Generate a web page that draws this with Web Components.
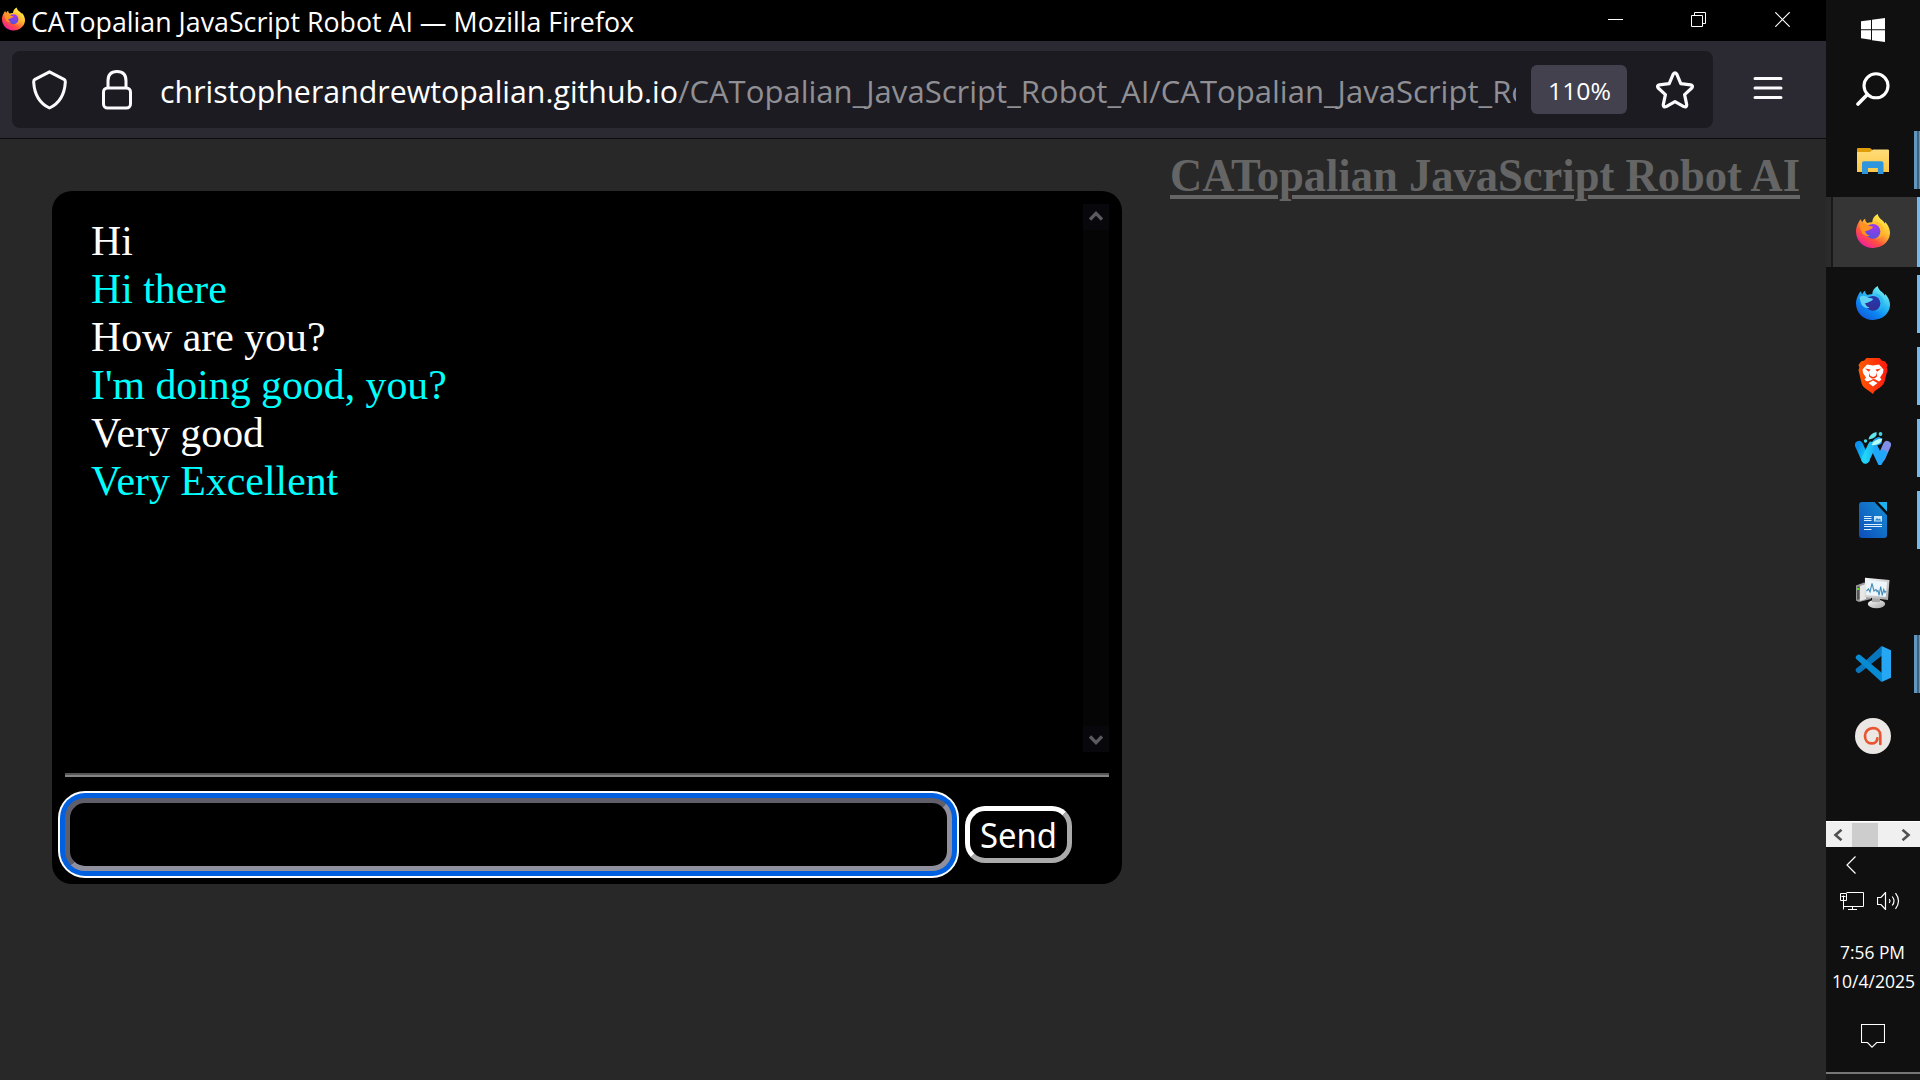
<!DOCTYPE html>
<html lang="en">
<head>
<meta charset="utf-8">
<title>CATopalian JavaScript Robot AI</title>
<style>
html,body{margin:0;height:100%;background:#282828;overflow:hidden}
body{font-family:"Open Sans","Noto Sans",sans-serif;color:#fff}
</style>
</head>
<body>
<desk-top></desk-top>
<script>
function define(name, css, html, ready) {
  const t = document.createElement('template');
  t.innerHTML = '<style>*{box-sizing:border-box}' + css + '</style>' + html;
  customElements.define(name, class extends HTMLElement {
    connectedCallback() {
      if (this.shadowRoot) return;
      this.attachShadow({mode: 'open'}).append(t.content.cloneNode(true));
      if (ready) ready(this, this.shadowRoot);
    }
  });
}

/* A single line of text that is condensed or widened to the given width. */
define('fit-text',
  ':host{display:block;white-space:nowrap;flex:none}span{display:inline-block;transform-origin:0 50%;vertical-align:top}',
  '<span><slot></slot></span>',
  (host, root) => {
    const s = root.querySelector('span'), w = +host.getAttribute('width');
    host.style.width = w + 'px';
    s.style.transform = 'scaleX(' + w / s.getBoundingClientRect().width + ')';
  });

const fox = (id, a, b, c, d, core1, core2, tail) => `<svg viewBox="0 0 34 34"><defs>
<linearGradient id="b${id}" x1=".85" y1=".1" x2=".25" y2=".95"><stop offset="0" stop-color="${a}"/><stop offset=".4" stop-color="${b}"/><stop offset=".72" stop-color="${c}"/><stop offset="1" stop-color="${d}"/></linearGradient>
<radialGradient id="c${id}" cx=".6" cy=".2" r=".9"><stop offset="0" stop-color="${core1}"/><stop offset="1" stop-color="${core2}"/></radialGradient></defs>
<path fill="url(#b${id})" d="M2.7 8.2C3.2 6.9 4.2 6 5 5.3c.1 1.2.5 2.2 1.2 2.9C7 6.4 8 5.3 9.2 4.8c0 2 .7 3.400 2.300 4.100 1.500-.7 3-.9 4.700-.7.300-3.800 2.200-6.500 5.500-8.200.4 2.700 2 4.100 4.200 6 1.200 1 2.200 2.200 2.900 3.400l.5-1.500c2.600 3.100 4.500 6.400 4.700 10.100.4 9-7.200 16-17 16S0 26.500 0 17.400c0-3.400 1-6.200 2.700-9.200z"/>
<circle cx="17" cy="17.300" r="7.400" fill="url(#c${id})"/>
<path fill="${tail}" d="M3.600 11c3.500-2 6.500-1.500 8.600 1.100 2 .2 4.300.2 4.700.8.300.9-2.300 2.500-4.100 3-.8.600-2.600 1.200-4.200 1 1 2.300 2.500 4 5.200 4.500-2.700 1.300-6 .2-7.700-2.100-1.200-1.700-2-4.800-2.500-8.300z"/>
<path fill="${b}" opacity=".75" d="M18 7.600c6-.2 10.300 4.600 9.500 10-.6 4.600-4.500 7.500-8.300 7.700 5-1.800 6.700-6.200 5-10.400-1.200-3.300-3.500-4.700-6.200-7.300z"/></svg>`;
const foxA = fox('f', '#fff44f', '#ffb52c', '#ff4f3f', '#f0209d', '#a436ee', '#4c55dc', '#ff9220');
const foxB = fox('d', '#7af4f2', '#29b8f2', '#0a84f4', '#1460d8', '#263aad', '#322c91', '#5fd3f6');

const icons = {
  fox: foxA, foxdev: foxB,
  start: '<svg viewBox="0 0 24 24" fill="#fff"><path d="M0 3.300 10 1.900v9.400H0zM11 1.800 24 0v11.300H11zM0 12.300h10v9.400L0 20.300zM11 12.300h13V24l-13-1.800z"/></svg>',
  search: '<svg viewBox="0 0 34 34" fill="none" stroke="#fff" stroke-width="3.100"><circle cx="20" cy="13.800" r="12"/><path d="M11.400 22.400 2 32" stroke-linecap="round" stroke-width="3.600"/></svg>',
  folder: '<svg viewBox="0 0 32 27"><defs><linearGradient id="y" x2="0" y2="1"><stop stop-color="#ffdc79"/><stop offset="1" stop-color="#fbc846"/></linearGradient></defs><path fill="#df9d0b" d="M0 2Q0 1 1 1h12l2.500 2L14 6H0z"/><path fill="url(#y)" d="M0 5h13l3-2.400h15q1 0 1 1V25H0z"/><path fill="#2f95dc" d="M7 14.300h17.500q2 0 2 2V27h-5.600v-6H11v6H5V16.300q0-2 2-2z"/></svg>',
  brave: '<svg viewBox="0 0 30 36"><defs><linearGradient id="r"><stop stop-color="#ff5a00"/><stop offset="1" stop-color="#ff1a10"/></linearGradient></defs><path fill="url(#r)" d="M8.500 0h13L24 2.800q2.500-.5 4 2L29.500 7l-.8 2.500.8 2.300-3 12q-.8 3-3.300 4.700l-6.700 4.700L15 36l-1.600-1.300L6.800 30Q4.200 28 3.500 25L.5 12l.8-2.400L.5 7 2 4.800q1.500-2.500 4-2z"/><path fill="#fff" d="M9 6.500l6 1 6-1 4.500 5-.5 3.500-3 4.500 1.500 2-2.500 2-4-2.300L15 21l-2 1.200L9 23.500l-2.500-2 1.500-2L5 15l-.5-3.500zM15 22.500l4.500 2.500-4.500 3.500-4.500-3.500z"/><path fill="#ff3209" d="M7 10.500l5.500 1-1.500 2 1.400 4.500L15 19l2.600-1 1.400-4.500-1.500-2 5.500-1-4.500 3.800.5 4.200-2.800 2H13.800l-2.800-2 .5-4.200z"/><path fill="#fff" d="M13 10h4l-.8 7h-2.400z"/></svg>',
  water: '<svg viewBox="0 0 36 34" fill="none" stroke-linecap="round"><defs><linearGradient id="w" x2="1" y2="1"><stop stop-color="#0b91ee"/><stop offset="1" stop-color="#12d0f7"/></linearGradient><linearGradient id="v" x2="1"><stop stop-color="#20d5f8"/><stop offset="1" stop-color="#1c9ff5"/></linearGradient></defs><path stroke="#7f8ee9" stroke-width="8" d="M32 14l-5.500 12.500"/><path stroke="#20a7f9" stroke-width="7.500" d="M19.500 17l5.500 11.500 3-6"/><path stroke="url(#w)" stroke-width="8" d="M4 14l6.500 14.500"/><path stroke="url(#v)" stroke-width="8" d="M10.500 28.200L17 14.500q2-4 6-4.500"/><path fill="#b6fff7" d="M16.500 14q2.500-6 11-6.500-1.500 5-5.500 6t-5.500.5z"/><path fill="#101010" d="M12 9.500q0-8 9.500-9.500h3l-1 6q-4 1-6.500 5z"/><path fill="#5fe6ee" d="M13.500 8.500q1-6 8-7.500 1.500 6-8 7.500z"/><circle cx="10.500" cy="10" r="1.700" fill="#46dbe8"/><circle cx="25.500" cy="3" r="1.900" fill="#46cfdc"/></svg>',
  writer: '<svg viewBox="0 0 28 36"><defs><linearGradient id="l" x1="1" x2="0" y2="1"><stop stop-color="#158fd3"/><stop offset="1" stop-color="#0d4dba"/></linearGradient></defs><path fill="url(#l)" d="M3 0h13l12 13v20q0 3-3 3H3q-3 0-3-3V3q0-3 3-3z"/><path fill="#0b0d10" d="M15.500 0H19l9 9.500V13z"/><path fill="#1cb2f0" d="M19 0h9v9.500z"/><path stroke="#dcefff" stroke-width="1" d="M5 14.500h7.500M5 16.500h7.500M5 18.500h7.500M5 22.500h18M5 24.500h18M5 27.500h7.500"/><path fill="#c9e5fb" d="M15 14h8v5.500h-8z"/><path fill="#2384cc" d="m16 18.600 2-2.600 1.600 1.600 1.200-1 1.400 2z"/></svg>',
  monitor: '<svg viewBox="0 0 34 32"><defs><linearGradient id="g" x2="1" y2="1"><stop stop-color="#fafafa"/><stop offset="1" stop-color="#a6a6a6"/></linearGradient></defs><path fill="#9b9b9b" d="M0 8.500 8 5.500l7 3V22L3 25 0 23.500z"/><path fill="#e7e7e7" d="M4 9l6-2v15l-6 2z"/><path fill="#565656" d="M1 10l2.500-1v13L1 23z"/><path fill="#54dd18" d="M1 11h2.300v2H1z"/><ellipse cx="20.500" cy="27" rx="8.700" ry="4.200" fill="url(#g)"/><path fill="#a9a9a9" d="M16 20h8v5h-8z"/><path fill="url(#g)" d="M9 .8 33.500 3 32 23 8.500 20z"/><path fill="#edf6fa" d="M10.500 2.800 31 4.900 29.800 20 10.200 18z"/><path fill="none" stroke="#448bb9" stroke-width="1.100" d="M10.500 14l2-2 1.500 3L16 6.500 18 14l2-1.500 1 2 1-1 1 5 1.700-9 1.500 9 1.500-6 1.300 3 1-1.500"/></svg>',
  code: '<svg viewBox="0 0 36 36"><path fill="#0876bf" d="M26.500 0 7 18 1.200 22.500Q0 24 1 25.600l1.500 1.200q1.200.8 2.800-.3L27 9.500z"/><path fill="#078bd3" d="M26.500 36 1 12.700Q0 11.300 1.200 10l1.500-1.300q1.300-.7 2.600.3L27 27z"/><path fill="#25a7f4" d="M26.500 0 36 4.200v27.600L26.500 36z"/></svg>',
  a: '<svg viewBox="0 0 36 36"><circle cx="18" cy="18" r="18" fill="#ebe7e4"/><path fill="none" stroke="#e95431" stroke-width="2.700" stroke-linecap="round" d="M25.300 26V17.500C25.300 12.500 22 10.200 18 10.200c-5 0-8 3.500-8 7.800s2.700 7.400 6.500 7.400c3.600 0 5.800-2.300 5.800-5"/></svg>',
  shield: '<svg viewBox="0 0 35 40" fill="none" stroke="#fbfbfe" stroke-width="3" stroke-linejoin="round"><path d="M17.500 1.800 32 9.300q1.500 1 1.300 3C32.500 25 28 33 17.500 38 7 33 2.500 25 1.700 12.300q-.2-2 1.300-3z"/></svg>',
  lock: '<svg viewBox="0 0 30 40" fill="none" stroke="#fbfbfe" stroke-width="3"><rect x="1.500" y="18" width="27" height="20" rx="4"/><path d="M6 18v-7.300Q6 1.500 15 1.500t9 9.200V18"/></svg>',
  star: '<svg viewBox="0 0 38 38" fill="none" stroke="#fbfbfe" stroke-width="3.200" stroke-linejoin="round"><path d="M17.200 3.200q1.800-2.800 3.600 0l4 9.400 9.800 1.200q3 .8 1.200 3.200L28.600 23.600l2.100 10q.2 3.200-2.900 2L19 30.700l-8.800 4.900q-3.100 1.200-2.900-2l2.100-10L2.200 17q-1.800-2.400 1.200-3.200l9.800-1.200z"/></svg>',
  menu: '<svg viewBox="0 0 30 24" stroke="#fbfbfe" stroke-width="3" stroke-linecap="round"><path d="M2 2.500h26M2 12h26M2 21.500h26"/></svg>',
  min: '<svg viewBox="0 0 15 15" stroke="#fff"><path d="M0 7.500h15"/></svg>',
  max: '<svg viewBox="0 0 15 15" fill="none" stroke="#fff"><path d="M.5 3.500h11v11H.5zM3.500 3V.5h11v11H12"/></svg>',
  close: '<svg viewBox="0 0 15 15" stroke="#fff" stroke-width="1.200"><path d="M.3.3l14.400 14.400M14.700.3.3 14.700"/></svg>',
  up: '<svg viewBox="0 0 14 10" fill="none" stroke="#5b5b5f" stroke-width="3.300"><path d="M1 8.500 7 2.400l6 6.100"/></svg>',
  down: '<svg viewBox="0 0 14 10" fill="none" stroke="#5b5b5f" stroke-width="3.300"><path d="M1 1.500l6 6.100 6-6.100"/></svg>',
  left: '<svg viewBox="0 0 10 12" fill="none" stroke="#505050" stroke-width="2.600"><path d="M8.500.8 2.500 6l6 5.200"/></svg>',
  right: '<svg viewBox="0 0 10 12" fill="none" stroke="#505050" stroke-width="2.600"><path d="M1.500.8 7.500 6l-6 5.200"/></svg>',
  back: '<svg viewBox="0 0 10 18" fill="none" stroke="#fff" stroke-width="1.200"><path d="M9.500.5 1 9l8.500 8.500"/></svg>',
  net: '<svg viewBox="0 0 24 18" fill="none" stroke="#fff"><path d="M6.500.5h17v14H3.500M.5 1.500h6v7h-6zM3.500 3.500v14M1.500 4.500h4M12.500 14.500v3M8 17.500h9"/></svg>',
  sound: '<svg viewBox="0 0 23 18" fill="none" stroke="#fff" stroke-width="1.200"><path d="M.5 5.500h3.500l4.500-5v17l-4.500-5H.5z"/><path d="M12.300 7q1.500 2 0 4M15.200 4.500q3.600 4.500 0 9"/><path d="M18.500 1.200q6 7.800 0 15.600"/></svg>',
  note: '<svg viewBox="0 0 24 24" fill="none" stroke="#fff" stroke-width="1.100"><path d="M.5.5h23v18h-7.800L11 23.200 6.500 18.500h-6z"/></svg>'
};
/* Pictogram picked by name; w and h give its box. */
define('ui-icon', ':host{display:block;flex:none}svg{display:block;width:100%;height:100%}', '', (host, root) => {
  host.style.width = host.getAttribute('w') + 'px';
  host.style.height = host.getAttribute('h') + 'px';
  root.append(document.createRange().createContextualFragment(icons[host.getAttribute('name')]));
});

define('title-bar',
  `:host{display:flex;align-items:center;height:41px;background:#000;padding:0 36px 1px 3px}
   .fx{margin:-2px 6px 0 -1px}fit-text{font-size:27.5px;line-height:41px;padding-top:2px;flex:none}
   .btns{display:flex;gap:68px;margin:-2px 0 0 auto}.btns ui-icon+ui-icon+ui-icon{margin-left:1px}`,
  `<ui-icon class="fx" name="fox" w="23" h="24"></ui-icon><fit-text width="603"><slot></slot></fit-text>
   <div class="btns"><ui-icon name="min" w="15" h="15"></ui-icon><ui-icon name="max" w="15" h="15"></ui-icon><ui-icon name="close" w="15" h="15"></ui-icon></div>`);

define('tool-bar',
  `:host{display:flex;height:98px;background:#2b2a33;border-bottom:1px solid #0c0c0d;padding:10px 43px 10px 12px;justify-content:space-between}
   .url{width:1701px;height:77px;border-radius:8px;background:#1c1b22;display:flex;align-items:center;padding-left:20px}
   .lock{margin:0 28px 0 35px}
   .text{display:flex;width:1356px;overflow:hidden;font-size:30.5px;line-height:50px;padding-top:2px}.path{color:#8f8f94}
   .zoom{width:96px;height:49px;border-radius:6px;background:#42414d;margin:0 29px 0 15px;padding:1px 0 0 17px;font-size:24.5px;line-height:49px}
   .menu{margin-top:25px}`,
  `<div class="url"><ui-icon name="shield" w="35" h="40"></ui-icon><ui-icon class="lock" name="lock" w="30" h="40"></ui-icon>
   <div class="text"><fit-text width="518">christopherandrewtopalian.github.io</fit-text><fit-text class="path" width="842">/CATopalian_JavaScript_Robot_AI/CATopalian_JavaScript_Ro</fit-text></div>
   <div class="zoom"><fit-text width="63">110%</fit-text></div><ui-icon name="star" w="38" h="38"></ui-icon></div>
   <ui-icon class="menu" name="menu" w="30" h="24"></ui-icon>`.replace('842', '852'));

define('chat-line',
  `:host{display:block;height:48px;font:41.8px/48px "Liberation Serif",serif;color:#fff}:host([bot]){color:#0ff}`,
  `<slot></slot>`);

define('scroll-bar',
  `:host{display:flex;flex-direction:column;justify-content:space-between;width:26px;height:548px;background:#050506}
   div{height:26px;background:#08080c;display:flex;align-items:center;justify-content:center}
   div:first-of-type{padding-bottom:2px}div:last-of-type{padding-top:2px}`,
  `<div><ui-icon name="up" w="14" h="10"></ui-icon></div><div><ui-icon name="down" w="14" h="10"></ui-icon></div>`);

define('chat-box',
  `:host{display:block;width:1070px;height:693px;border-radius:20px;background:#000;padding:13px 13px 0}
   .log{display:flex;justify-content:space-between;height:548px}.lines{padding:13px 0 0 26px}
   hr{margin:21px 0 0;border:0;height:4px;border-top:2px solid #555;border-bottom:2px solid #858585}
   .row{display:flex;align-items:center;gap:13px;margin-top:21px}
   input{width:887px;height:73px;margin:0;border:5px solid;border-color:#5f5e69 #8f8f9d #8f8f9d #5f5e69;border-radius:20px;background:#000;outline:0;box-shadow:0 0 0 5px #0060df,0 0 0 7px #fff}
   button{width:107px;height:57px;margin:0;padding:0 0 0 10px;border:5px solid;border-color:#fff #aaa #aaa #fff;border-radius:20px;background:#000;color:#fff;font:34.5px/46px "Noto Sans",sans-serif;text-align:left}`,
  `<div class="log"><div class="lines"><slot></slot></div><scroll-bar></scroll-bar></div><hr>
   <div class="row"><input type="text"><button><fit-text width="77">Send</fit-text></button></div>`);

define('page-view',
  `:host{display:flex;align-items:flex-start;justify-content:space-between;height:941px;padding:0 26px 0 52px;background:#282828}
   chat-box{margin-top:52px}
   fit-text{margin-top:10px;font:bold 46px/54px "Liberation Serif",serif;color:#656565}
   u{text-decoration-thickness:4px;text-underline-offset:4px}`,
  `<chat-box><chat-line>Hi</chat-line><chat-line bot>Hi there</chat-line><chat-line>How are you?</chat-line><chat-line bot>I'm doing good, you?</chat-line><chat-line>Very good</chat-line><chat-line bot>Very Excellent</chat-line></chat-box>
   <fit-text width="630"><u>CATopalian JavaScript Robot AI</u></fit-text>`);

define('task-item',
  `:host{display:flex;height:72px;align-items:center;justify-content:space-between;padding-left:29px}
   .c{width:36px;display:flex;justify-content:center}.bar{width:3px;height:58px;background:#76b9ed}
   :host([multi]) .bar{width:6px;background:linear-gradient(90deg,#6096c0 3px,#3e617e 3px 5px,#6096c0 5px)}
   :host([idle]) .bar{visibility:hidden}
   :host([active]){height:70px;margin:1px 0;background:linear-gradient(90deg,#2b2b2b 5px,#191919 5px 7px,#353535 7px)}
   :host([active]) .bar{height:70px}`,
  `<div class="c"><slot></slot></div><div class="bar"></div>`);

define('mini-scroll',
  `:host{display:flex;height:26px;background:#f0f0f0;border-top:1px solid #fff;align-items:center;padding:0 8px 0 7px}
   div{width:26px;height:24px;background:#cdcdcd;margin:0 23px 0 9px}`,
  `<ui-icon name="left" w="10" h="12"></ui-icon><div></div><ui-icon name="right" w="10" h="12"></ui-icon>`);

define('task-bar',
  `:host{display:flex;flex-direction:column;width:94px;height:1080px;background:#101010}
   .start{margin:18px 0 0 35px}.search{margin:30px 0 0 30px}.apps{margin-top:18px}
   .hi{margin-bottom:2px}.lo{margin-top:2px}
   mini-scroll{margin-top:49px}.back{margin:9px 0 0 20px}.tray{display:flex;gap:13px;margin:18px 0 0 14px}
   .clock{margin-top:27px;font-size:18px;line-height:30px}.t{margin-left:14px}.d{margin-left:6px}.d{margin-top:-1px}
   .note{margin:28px 0 0 35px}.foot{margin-top:auto;height:8px;background:#1a1a1a;border-top:2px solid #777}`,
  `<ui-icon class="start" name="start" w="24" h="24"></ui-icon><ui-icon class="search" name="search" w="34" h="34"></ui-icon>
   <div class="apps">
   <task-item multi><ui-icon name="folder" w="32" h="27"></ui-icon></task-item>
   <task-item active><ui-icon class="hi" name="fox" w="34" h="34"></ui-icon></task-item>
   <task-item><ui-icon class="hi" name="foxdev" w="34" h="34"></ui-icon></task-item>
   <task-item><ui-icon name="brave" w="30" h="36"></ui-icon></task-item>
   <task-item><ui-icon name="water" w="36" h="34"></ui-icon></task-item>
   <task-item><ui-icon name="writer" w="28" h="36"></ui-icon></task-item>
   <task-item idle><ui-icon class="lo" name="monitor" w="34" h="32"></ui-icon></task-item>
   <task-item multi><ui-icon name="code" w="36" h="36"></ui-icon></task-item>
   <task-item idle><ui-icon name="a" w="36" h="36"></ui-icon></task-item>
   </div>
   <mini-scroll></mini-scroll><ui-icon class="back" name="back" w="10" h="18"></ui-icon>
   <div class="tray"><ui-icon name="net" w="24" h="18"></ui-icon><ui-icon name="sound" w="23" h="18"></ui-icon></div>
   <div class="clock"><fit-text class="t" width="65">7:56 PM</fit-text><fit-text class="d" width="83">10/4/2025</fit-text></div>
   <ui-icon class="note" name="note" w="24" h="24"></ui-icon><div class="foot"></div>`);

define('desk-top', ':host{display:flex;width:1920px;height:1080px}main{width:1826px}',
  `<main><title-bar>CATopalian JavaScript Robot AI — Mozilla Firefox</title-bar><tool-bar></tool-bar><page-view></page-view></main><task-bar></task-bar>`);
</script>
</body>
</html>
